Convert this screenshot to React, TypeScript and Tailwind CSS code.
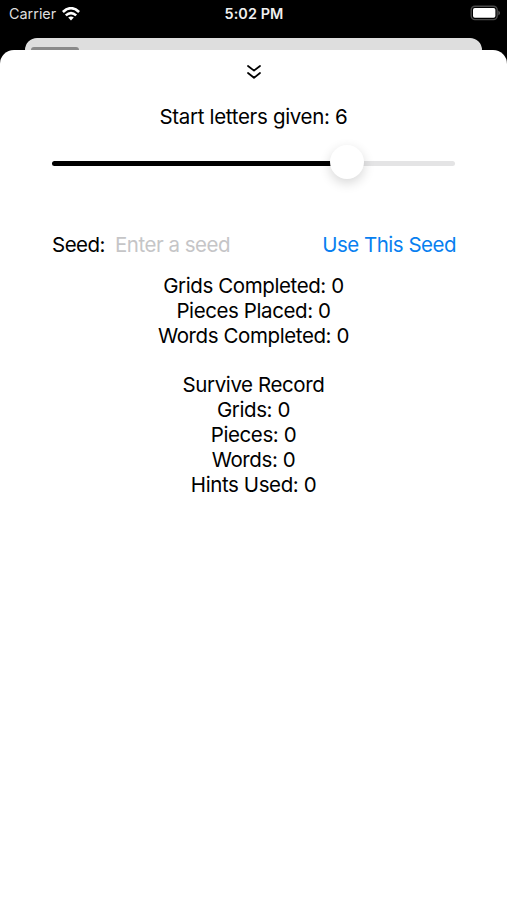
const totals = ['Grids Completed: 0', 'Pieces Placed: 0', 'Words Completed: 0'];
const surviveRecord = ['Survive Record', 'Grids: 0', 'Pieces: 0', 'Words: 0', 'Hints Used: 0'];

function StatusBar() {
  return (
    <div className="h-[38px] pt-[4px] pl-[9px] pr-[6px] grid grid-cols-[1fr_auto_1fr] items-start text-white text-[14.4px] leading-5">
      <div className="flex items-center gap-[6px]">
        <span className="text-[#dedede]">Carrier</span>
        <svg width="18" height="14" viewBox="0 0 18 14" fill="none" stroke="white" strokeWidth="2.6">
          <path d="M0.9 5 Q9 -2.6 17.1 5" />
          <path d="M3.8 8.4 Q9 3.8 14.2 8.4" />
          <path d="M6.2 10.6 Q9 8.2 11.8 10.6 L9 13.4 Z" fill="white" stroke="none" />
        </svg>
      </div>
      <span className="text-center font-semibold text-[#f0f0f0] tracking-[0.1px] -translate-x-[1px]">5:02 PM</span>
      <svg className="justify-self-end mt-[1px]" width="31" height="16" viewBox="0 0 31 16">
        <rect x="1.2" y="1.2" width="26" height="13.4" rx="3.8" fill="none" stroke="#4a4a4a" strokeWidth="1.4" />
        <rect x="3" y="3" width="22.4" height="9.8" rx="1.8" fill="white" />
        <path d="M28.4 5.6 Q31.6 8 28.4 10.4 Z" fill="#5a5a5a" />
      </svg>
    </div>
  );
}

function LetterSlider() {
  return (
    <div className="relative mx-[52px] mt-[16px] h-9 flex items-center">
      <div className="h-[5px] w-[294px] bg-black rounded-full" />
      <div className="h-[5px] flex-1 bg-[#e4e4e5] rounded-r-full" />
      <div className="absolute left-[277.5px] top-0 size-[34px] rounded-full bg-white shadow-[0_4px_12px_rgba(0,0,0,0.16)]" />
    </div>
  );
}

export default function App() {
  return (
    <div className="w-[507px] h-[900px] bg-black overflow-hidden flex flex-col font-[Inter,sans-serif] text-black">
      <StatusBar />
      <div className="mx-[25px] h-[12px] shrink-0 rounded-t-[12px] bg-[#dedede]">
        <div className="ml-[6px] pt-[9px]"><div className="h-[3px] w-[48px] rounded-t-[6px] bg-[#8a8a8a]" /></div>
      </div>
      <main className="flex-1 bg-white rounded-t-[14px] flex flex-col text-[20.5px] leading-[24.9px] tracking-[-0.4px]">
        <svg className="mx-auto mt-[14px]" width="16" height="16" viewBox="0 0 16 16" fill="none" stroke="black" strokeWidth="1.8" strokeLinecap="round" strokeLinejoin="round">
          <path d="M2 2 L8 6.6 L14 2 M2 9 L8 13.8 L14 9" />
        </svg>
        <p className="mt-[24.5px] text-center tracking-[-0.32px]">Start letters given: 6</p>
        <LetterSlider />
        <div className="mx-[52px] mt-[51.5px] flex tracking-[-0.5px]">
          <span>Seed:</span>
          <span className="ml-[10px] text-[#c5c5c7]">Enter a seed</span>
          <span className="ml-auto -mr-[1px] text-[#087ff0]">Use This Seed</span>
        </div>
        <div className="mt-[16px] text-center">
          {totals.map((line) => <p key={line}>{line}</p>)}
        </div>
        <div className="mt-[24.9px] text-center">
          {surviveRecord.map((line) => <p key={line}>{line}</p>)}
        </div>
      </main>
    </div>
  );
}
